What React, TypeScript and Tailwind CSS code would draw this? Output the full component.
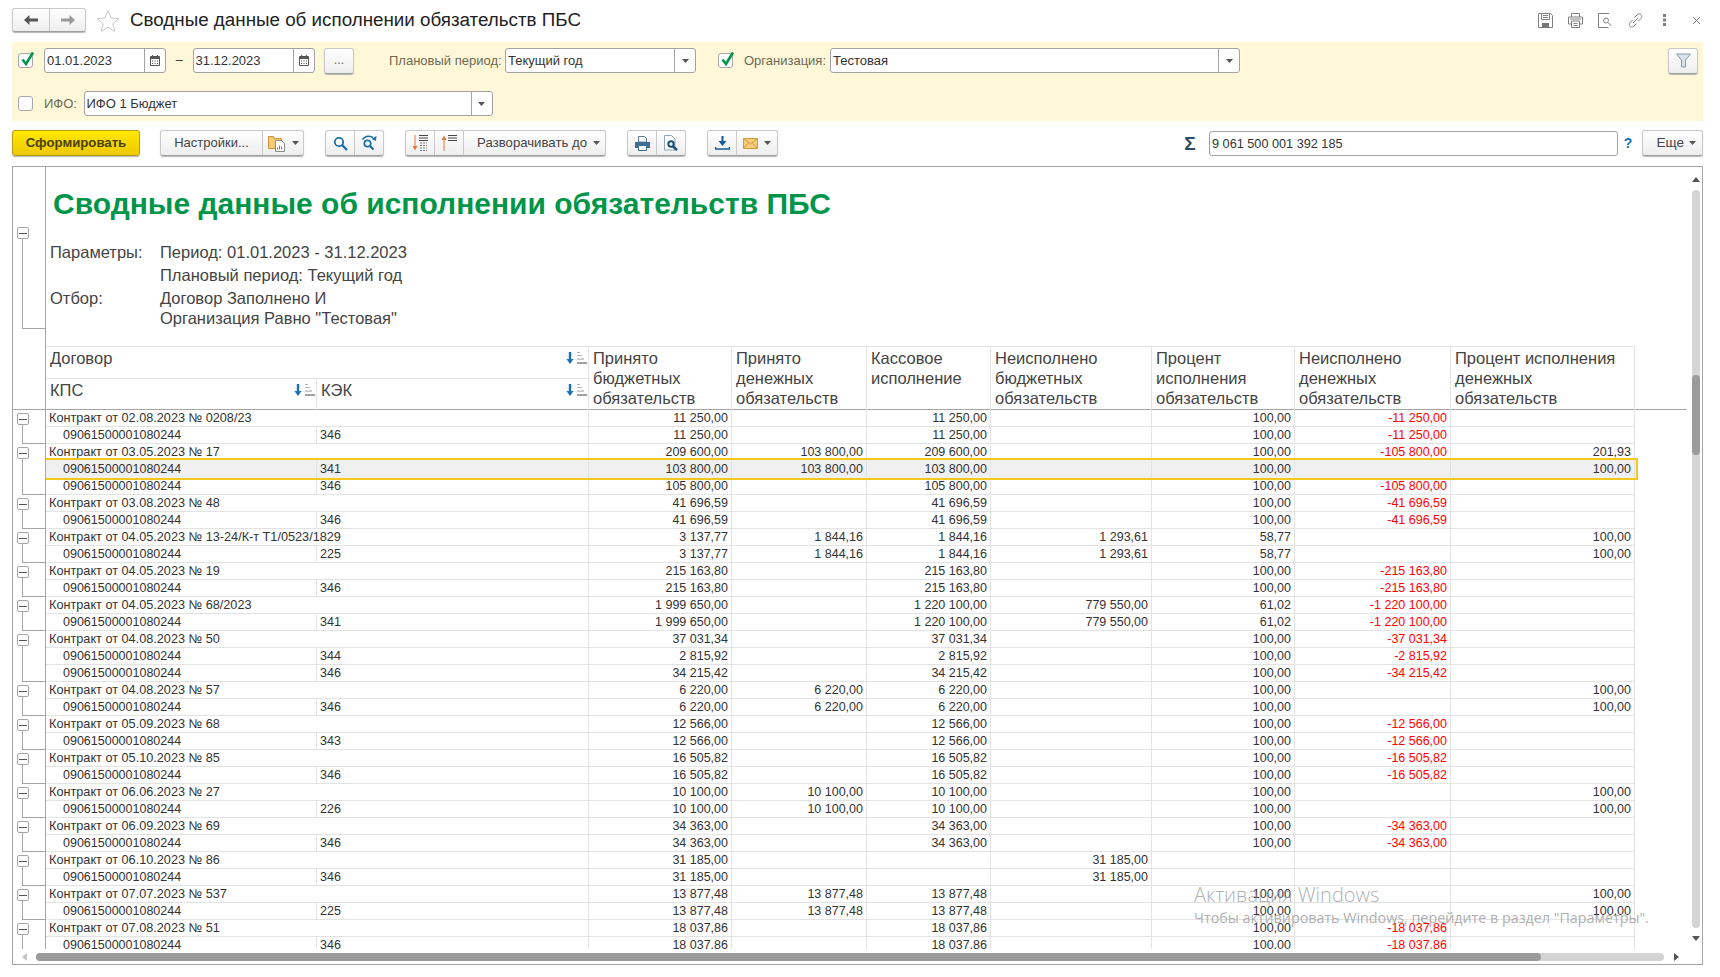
import type { ReactNode } from 'react';

type Row = { name?: string; kek?: string; v: string[]; last?: boolean; sel?: boolean };

const GRID = 'grid grid-cols-[271px_272px_143px_135px_124px_161px_143px_156px_184px] w-[1589px]';

function group(name: string, v: string[], kids: { kek: string; v?: string[]; sel?: boolean }[]): Row[] {
  const rows: Row[] = [{ name, v }];
  kids.forEach((k, i) => {
    rows.push({ kek: k.kek, v: k.v ?? v, last: i === kids.length - 1, sel: k.sel });
  });
  return rows;
}

const rows: Row[] = [
  ...group('Контракт от 02.08.2023 № 0208/23', ['11 250,00', '', '11 250,00', '', '100,00', '-11 250,00', ''], [{ kek: '346' }]),
  ...group('Контракт от 03.05.2023 № 17', ['209 600,00', '103 800,00', '209 600,00', '', '100,00', '-105 800,00', '201,93'], [
    { kek: '341', v: ['103 800,00', '103 800,00', '103 800,00', '', '100,00', '', '100,00'], sel: true },
    { kek: '346', v: ['105 800,00', '', '105 800,00', '', '100,00', '-105 800,00', ''] },
  ]),
  ...group('Контракт от 03.08.2023 № 48', ['41 696,59', '', '41 696,59', '', '100,00', '-41 696,59', ''], [{ kek: '346' }]),
  ...group('Контракт от 04.05.2023 № 13-24/К-т Т1/0523/1829', ['3 137,77', '1 844,16', '1 844,16', '1 293,61', '58,77', '', '100,00'], [{ kek: '225' }]),
  ...group('Контракт от 04.05.2023 № 19', ['215 163,80', '', '215 163,80', '', '100,00', '-215 163,80', ''], [{ kek: '346' }]),
  ...group('Контракт от 04.05.2023 № 68/2023', ['1 999 650,00', '', '1 220 100,00', '779 550,00', '61,02', '-1 220 100,00', ''], [{ kek: '341' }]),
  ...group('Контракт от 04.08.2023 № 50', ['37 031,34', '', '37 031,34', '', '100,00', '-37 031,34', ''], [
    { kek: '344', v: ['2 815,92', '', '2 815,92', '', '100,00', '-2 815,92', ''] },
    { kek: '346', v: ['34 215,42', '', '34 215,42', '', '100,00', '-34 215,42', ''] },
  ]),
  ...group('Контракт от 04.08.2023 № 57', ['6 220,00', '6 220,00', '6 220,00', '', '100,00', '', '100,00'], [{ kek: '346' }]),
  ...group('Контракт от 05.09.2023 № 68', ['12 566,00', '', '12 566,00', '', '100,00', '-12 566,00', ''], [{ kek: '343' }]),
  ...group('Контракт от 05.10.2023 № 85', ['16 505,82', '', '16 505,82', '', '100,00', '-16 505,82', ''], [{ kek: '346' }]),
  ...group('Контракт от 06.06.2023 № 27', ['10 100,00', '10 100,00', '10 100,00', '', '100,00', '', '100,00'], [{ kek: '226' }]),
  ...group('Контракт от 06.09.2023 № 69', ['34 363,00', '', '34 363,00', '', '100,00', '-34 363,00', ''], [{ kek: '346' }]),
  ...group('Контракт от 06.10.2023 № 86', ['31 185,00', '', '', '31 185,00', '', '', ''], [{ kek: '346' }]),
  ...group('Контракт от 07.07.2023 № 537', ['13 877,48', '13 877,48', '13 877,48', '', '100,00', '', '100,00'], [{ kek: '225' }]),
  ...group('Контракт от 07.08.2023 № 51', ['18 037,86', '', '18 037,86', '', '100,00', '-18 037,86', ''], [{ kek: '346' }]),
];

const headers = [
  ['Принято', 'бюджетных', 'обязательств'],
  ['Принято', 'денежных', 'обязательств'],
  ['Кассовое', 'исполнение'],
  ['Неисполнено', 'бюджетных', 'обязательств'],
  ['Процент', 'исполнения', 'обязательств'],
  ['Неисполнено', 'денежных', 'обязательств'],
  ['Процент исполнения', 'денежных', 'обязательств'],
];

function Caret() {
  return (
    <svg width="7" height="4" viewBox="0 0 7 4" className="shrink-0">
      <path d="M0 0h7L3.500 4z" fill="#555" />
    </svg>
  );
}

function CalendarIcon() {
  return (
    <svg width="10" height="11" viewBox="0 0 10 11">
      <path d="M.5 1.500h9v9h-9z" fill="#fff" stroke="#555" />
      <path d="M.5 1.500h9v2.500h-9z" fill="#555" />
      <path d="M2 5.500h1v1H2zM4.500 5.500h1v1h-1zM7 5.500h1v1H7zM2 8h1v1H2zM4.500 8h1v1h-1zM7 8h1v1H7z" fill="#555" />
      <path d="M2.500 0v2M7.500 0v2" stroke="#555" />
    </svg>
  );
}

function Check() {
  return (
    <svg width="15" height="15" viewBox="0 0 15 15" className="absolute left-[1px] -top-[3px]">
      <path d="M2.500 8.500 6 13 13 1.500" fill="none" stroke="#00964a" strokeWidth="2.600" />
    </svg>
  );
}

function Checkbox({ on, className }: { on?: boolean; className?: string }) {
  return (
    <div className={`relative w-[15px] h-[15px] shrink-0 bg-white border border-[#a8a8a8] rounded-[3px] ${className ?? ''}`}>
      {on && <Check />}
    </div>
  );
}

function Field({ w, value, icon, className }: { w: string; value: string; icon: ReactNode; className?: string }) {
  return (
    <div className={`${w} h-[25px] shrink-0 flex bg-white border border-[#a3a3a3] rounded-[3px] ${className ?? ''}`}>
      <div className="flex-1 pl-[2px] leading-[24px] text-[13px] text-[#333] truncate">{value}</div>
      <div className="w-[21px] border-l border-[#a3a3a3] flex items-center justify-center">{icon}</div>
    </div>
  );
}

const BTN = 'h-[26px] shrink-0 flex bg-gradient-to-b from-white to-[#eeeeee] border border-[#c9c9c9] border-b-[#9f9f9f] rounded-[3px] shadow-[0_1px_1px_#b5b5b5]';

function Seg({ w, children, first }: { w: string; children: ReactNode; first?: boolean }) {
  return (
    <div className={`${w} flex items-center justify-center gap-[6px] ${first ? '' : 'border-l border-[#c9c9c9]'}`}>{children}</div>
  );
}

function SortMark() {
  return (
    <svg width="21" height="14" viewBox="0 0 21 14" className="shrink-0">
      <path d="M4 1v8" stroke="#1671bd" strokeWidth="2.400" />
      <path d="M.5 8h7L4 13z" fill="#1671bd" />
      <path d="M11 1.500h3M11 4.500h5" stroke="#b5b5b5" />
      <path d="M11 8h7" stroke="#9a9a9a" />
      <path d="M11 12h10" stroke="#666" strokeWidth="1.200" />
    </svg>
  );
}

function FolderDoc() {
  return (
    <svg width="18" height="18" viewBox="0 0 18 18">
      <path d="M.5 2.500h5l1 2h7v10h-13z" fill="#f3cb74" stroke="#c8923a" />
      <path d="M7.500 6.500h6l3 3v8h-9z" fill="#fff" stroke="#8a8a8a" />
      <path d="M9.500 15.500v-2" stroke="#4aa050" />
      <path d="M11.500 15.500v-4" stroke="#d9534f" />
      <path d="M13.500 15.500v-3" stroke="#3f8fd0" />
    </svg>
  );
}

function SearchIcon() {
  return (
    <svg width="15" height="15" viewBox="0 0 15 15">
      <circle cx="6" cy="6" r="4.200" fill="#fff" stroke="#1d6fa8" strokeWidth="1.800" />
      <path d="m9.200 9.200 4.800 4.800" stroke="#1d6fa8" strokeWidth="2.400" />
    </svg>
  );
}

function RefreshSearchIcon() {
  return (
    <svg width="17" height="16" viewBox="0 0 17 16">
      <path d="M1.500 4.500C4 1 8 .5 12 2.500" fill="none" stroke="#1d6fa8" strokeWidth="1.500" />
      <path d="m15.500 1-.5 5-4.500-2z" fill="#1d6fa8" />
      <circle cx="6.500" cy="8.500" r="3.200" fill="#fff" stroke="#1d6fa8" strokeWidth="1.700" />
      <path d="m9 11 3.500 3.500" stroke="#1d6fa8" strokeWidth="2.200" />
    </svg>
  );
}

function ExpandIcon() {
  return (
    <svg width="16" height="16" viewBox="0 0 16 16">
      <path d="M3 0v12" stroke="#e8743b" />
      <path d="M.5 11h5L3 15.500z" fill="#e8743b" />
      <path d="M7 .5h9M7 3h9M7 5.500h9" stroke="#444" />
      <path d="M8 8h7M8 10.500h7M8 13h7M8 15.500h7" stroke="#777" strokeDasharray="2 1" />
    </svg>
  );
}

function CollapseIcon() {
  return (
    <svg width="16" height="16" viewBox="0 0 16 16">
      <path d="M3 3.500V16" stroke="#e8743b" />
      <path d="M.5 5h5L3 .5z" fill="#e8743b" />
      <path d="M7 .5h9M7 3h9M7 5.500h9" stroke="#444" />
    </svg>
  );
}

function PrintIcon() {
  return (
    <svg width="15" height="15" viewBox="0 0 15 15">
      <path d="M3.500.5h6l2 2V6h-8z" fill="#fff" stroke="#5e7e96" />
      <path d="M0 6h15v6H0z" fill="#3f6f93" />
      <path d="M3.500 9.500h8v5h-8z" fill="#fff" stroke="#3f6f93" />
    </svg>
  );
}

function PreviewIcon() {
  return (
    <svg width="15" height="16" viewBox="0 0 15 16">
      <path d="M.5.5h7l3.500 3.500v11H.5z" fill="#fff" stroke="#8fa6b8" />
      <circle cx="7" cy="9" r="2.700" fill="#fff" stroke="#174f78" strokeWidth="2" />
      <path d="m9 11.500 4 3.500" stroke="#174f78" strokeWidth="2.400" />
    </svg>
  );
}

function DownloadIcon() {
  return (
    <svg width="15" height="14" viewBox="0 0 15 14">
      <path d="M7.500 0v6" stroke="#0f5f96" strokeWidth="2" />
      <path d="M3.500 5h8l-4 5z" fill="#0f5f96" />
      <path d="M.5 11v2h14v-2" fill="none" stroke="#0f5f96" strokeWidth="1.500" />
    </svg>
  );
}

function MailIcon() {
  return (
    <svg width="15" height="11" viewBox="0 0 15 11">
      <path d="M.5.5h14v10H.5z" fill="#f4cc7c" stroke="#d29a3a" />
      <path d="m.5.5 7 5.500 7-5.500M.5 10.500l5-5.500M14.500 10.500l-5-5.500" fill="none" stroke="#d29a3a" />
    </svg>
  );
}

function FilterIcon() {
  return (
    <svg width="15" height="15" viewBox="0 0 15 15">
      <path d="M.5 1h14L9.500 7v7h-4V7z" fill="#d7e2ea" stroke="#8d9aa5" />
    </svg>
  );
}

function TitleIcons() {
  return (
    <div className="ml-auto flex items-center">
      <svg width="15" height="15" viewBox="0 0 15 15" className="mr-[15px]">
        <path d="M.5.5h12l2 2v12H.5z" fill="none" stroke="#808080" />
        <path d="M3.500.5v6h8v-6M5 2.500h5M5 4.500h5" fill="none" stroke="#808080" />
        <path d="M4 10h7v5H4z" fill="#777" />
      </svg>
      <svg width="15" height="15" viewBox="0 0 15 15" className="mr-[15px]">
        <path d="M3.500 4V.5h8V4M3.500 11H.5V4h14v7h-3" fill="none" stroke="#808080" />
        <path d="M3.500 8h8v6.500h-8zM5.500 10.500h4M5.500 12.500h4M2 6h11" fill="none" stroke="#808080" />
      </svg>
      <svg width="15" height="15" viewBox="0 0 15 15" className="mr-[15px]">
        <path d="M11 .5H.5v14h10" fill="none" stroke="#808080" />
        <circle cx="8" cy="7.500" r="2.500" fill="none" stroke="#808080" />
        <path d="m10 9.500 3.500 3.500" stroke="#808080" />
      </svg>
      <svg width="15" height="15" viewBox="0 0 15 15" className="mr-[20px]">
        <path d="M6.500 4.500 9 2c1.500-1.500 3-1.300 4-.3s1.200 2.500-.3 4L10.200 8.200M8.500 10.500 6 13c-1.500 1.500-3 1.300-4 .3s-1.200-2.500.3-4L4.800 6.800M5 10l5-5" fill="none" stroke="#808080" />
      </svg>
      <svg width="4" height="12" viewBox="0 0 4 12" className="mr-[25px]">
        <path d="M0 0h3v3H0zM0 4.500h3v3H0zM0 9h3v3H0z" fill="#808080" />
      </svg>
      <svg width="9" height="9" viewBox="0 0 9 9">
        <path d="m1 1 7 7M8 1 1 8" stroke="#808080" />
      </svg>
    </div>
  );
}

function TreeBox() {
  return (
    <>
      <div className="absolute left-[4px] top-[3px] w-[12px] h-[12px] bg-white border border-[#a5a5a5] rounded-[2px] flex items-center justify-center">
        <div className="w-[8px] h-[1px] bg-[#555]" />
      </div>
      <div className="absolute left-[9px] top-[15px] bottom-0 w-[1px] bg-[#a5a5a5]" />
    </>
  );
}

function GutterCell({ row }: { row: Row }) {
  return (
    <div className="relative w-[33px] shrink-0 border-r border-[#a5a5a5]">
      {row.name ? (
        <TreeBox />
      ) : (
        <>
          <div className="absolute left-[9px] top-0 bottom-0 w-[1px] bg-[#a5a5a5]" />
          {row.last && <div className="absolute left-[9px] right-0 bottom-0 h-[1px] bg-[#a5a5a5]" />}
        </>
      )}
    </div>
  );
}

function Amounts({ v, sel }: { v: string[]; sel?: boolean }) {
  return (
    <>
      {v.map((x, i) => (
        <div
          key={i}
          className={`border-r border-[#e3e3e3] pr-[3px] text-right whitespace-nowrap ${sel ? 'relative z-20' : ''} ${x.startsWith('-') ? 'text-[#ff0000]' : ''}`}
        >
          {x}
        </div>
      ))}
    </>
  );
}

function DataRow({ row }: { row: Row }) {
  return (
    <div className="flex h-[17px] leading-[17px]">
      <GutterCell row={row} />
      <div className={`${GRID} relative border-b border-[#e3e3e3]`}>
        {row.sel && (
          <div className="absolute left-0 -right-[3px] -top-[3px] -bottom-[3px] z-10 bg-[#f0f0f0] border-y-2 border-r-2 border-[#f5c71a]" />
        )}
        {row.name ? (
          <div className="col-span-2 border-r border-[#e3e3e3] pl-[3px] text-[12.7px] whitespace-nowrap">{row.name}</div>
        ) : (
          <>
            <div className={`border-r border-[#e3e3e3] pl-[17px] ${row.sel ? 'relative z-20' : ''}`}>09061500001080244</div>
            <div className={`border-r border-[#e3e3e3] pl-[3px] ${row.sel ? 'relative z-20' : ''}`}>{row.kek}</div>
          </>
        )}
        <Amounts v={row.v} sel={row.sel} />
      </div>
    </div>
  );
}

function TableHeader() {
  return (
    <div className="flex w-[1674px] h-[64px] border-b border-[#a5a5a5]">
      <div className="w-[33px] shrink-0 border-r border-[#a5a5a5]" />
      <div className={`${GRID} grid-rows-[32px_31px] border-t border-[#e3e3e3] text-[16.5px] leading-[20px] text-[#444]`}>
        <div className="col-span-2 border-r border-b border-[#e3e3e3] pl-[4px] pr-[1px] flex justify-between">
          <span className="pt-[1px]">Договор</span>
          <span className="pt-[4px]"><SortMark /></span>
        </div>
        {headers.map((h, i) => (
          <div key={i} className="row-span-2 border-r border-[#e3e3e3] pl-[4px] pt-[1px]">
            {h.map((t) => (
              <div key={t} className="whitespace-nowrap">{t}</div>
            ))}
          </div>
        ))}
        <div className="border-r border-[#e3e3e3] pl-[4px] pr-[1px] flex justify-between col-start-1 row-start-2">
          <span className="pt-[1px]">КПС</span>
          <span className="pt-[4px]"><SortMark /></span>
        </div>
        <div className="border-r border-[#e3e3e3] pl-[4px] pr-[1px] flex justify-between col-start-2 row-start-2">
          <span className="pt-[1px]">КЭК</span>
          <span className="pt-[4px]"><SortMark /></span>
        </div>
      </div>
    </div>
  );
}

function ReportTop() {
  return (
    <div className="flex h-[179px]">
      <div className="relative w-[33px] shrink-0 border-r border-[#a5a5a5]">
        <div className="absolute left-[4px] top-[60px] w-[12px] h-[12px] bg-white border border-[#a5a5a5] rounded-[2px] flex items-center justify-center">
          <div className="w-[8px] h-[1px] bg-[#555]" />
        </div>
        <div className="absolute left-[9px] right-0 top-[72px] h-[90px] border-l border-b border-[#a5a5a5]" />
      </div>
      <div className="flex-1 text-[#444]">
        <h1 className="pl-[7px] pt-[19px] text-[30px] leading-[36px] font-bold text-[#00964a] whitespace-nowrap">
          Сводные данные об исполнении обязательств ПБС
        </h1>
        <div className="mt-[19px] pl-[4px] grid grid-cols-[110px_1fr] text-[16.5px] grid-rows-[23px_23px_22px_19px] leading-[23px]">
          <div>Параметры:</div>
          <div>Период: 01.01.2023 - 31.12.2023</div>
          <div />
          <div>Плановый период: Текущий год</div>
          <div>Отбор:</div>
          <div>Договор Заполнено И</div>
          <div />
          <div className="leading-[19px]">Организация Равно "Тестовая"</div>
        </div>
      </div>
    </div>
  );
}

function Scrollbars() {
  return (
    <>
      <svg width="8" height="5" viewBox="0 0 8 5" className="absolute left-[1679px] top-[10px]"><path d="M0 5h8L4 0z" fill="#555" /></svg>
      <div className="absolute left-[1679px] top-[23px] w-[8px] h-[738px] rounded-[4px] bg-[#d4d4d4]">
        <div className="absolute left-0 top-[185px] w-[8px] h-[80px] rounded-[4px] bg-[#9b9b9b]" />
      </div>
      <svg width="8" height="5" viewBox="0 0 8 5" className="absolute left-[1679px] top-[769px]"><path d="M0 0h8L4 5z" fill="#555" /></svg>
      <svg width="5" height="8" viewBox="0 0 5 8" className="absolute left-[9px] top-[786px]"><path d="M5 0v8L0 4z" fill="#c4c4c4" /></svg>
      <div className="absolute left-[23px] top-[786px] w-[1628px] h-[8px] rounded-[4px] bg-[#d4d4d4]">
        <div className="absolute left-0 top-0 w-[1505px] h-[8px] rounded-[4px] bg-[#9b9b9b]" />
      </div>
      <svg width="5" height="8" viewBox="0 0 5 8" className="absolute left-[1661px] top-[786px]"><path d="M0 0v8l5-4z" fill="#555" /></svg>
    </>
  );
}

export default function App() {
  return (
    <div className="relative w-[1720px] h-[977px] overflow-hidden bg-white font-['Liberation_Sans',Arial,sans-serif] text-[12.5px] text-[#333]">
      {/* window title */}
      <div className="flex items-center h-[24px] mt-[8px] pl-3 pr-[19px]">
        <div className={`w-[74px] !h-[24px] ${BTN}`}>
          <Seg w="w-[36px]" first>
            <svg width="14" height="10" viewBox="0 0 14 10"><path d="M5.500 0v3.500H14v3H5.500V10L0 5z" fill="#555" /></svg>
          </Seg>
          <Seg w="w-[36px]">
            <svg width="14" height="10" viewBox="0 0 14 10"><path d="M8.500 0v3.500H0v3h8.500V10L14 5z" fill="#9a9a9a" /></svg>
          </Seg>
        </div>
        <svg width="24" height="23" viewBox="0 0 24 23" className="ml-[10px]">
          <path d="m12 1.500 3 7.500 8 .6-6.200 5.100 2 7.800L12 18.200l-6.800 4.300 2-7.800L1 9.600 9 9z" fill="#fff" stroke="#c9c9c9" />
        </svg>
        <div className="ml-[10px] text-[18.8px] text-[#222] whitespace-nowrap">Сводные данные об исполнении обязательств ПБС</div>
        <TitleIcons />
      </div>

      {/* filters */}
      <div className="ml-3 mt-[10px] w-[1691px] h-[79px] bg-[#fff8d8] pt-[6px]">
        <div className="flex items-center h-[25px]">
          <Checkbox on className="ml-[6px]" />
          <Field w="w-[122px] ml-[11px]" value="01.01.2023" icon={<CalendarIcon />} />
          <div className="w-[26.5px] text-center shrink-0">–</div>
          <Field w="w-[122px]" value="31.12.2023" icon={<CalendarIcon />} />
          <div className={`w-[30px] ml-[9.5px] items-center justify-center text-[#666] ${BTN}`}>...</div>
          <div className="ml-[35px] w-[116px] shrink-0 text-[13px] text-[#6b6a52]">Плановый период:</div>
          <Field w="w-[191px]" value="Текущий год" icon={<Caret />} />
          <Checkbox on className="ml-[22px]" />
          <div className="ml-[11px] w-[86px] shrink-0 text-[13px] text-[#6b6a52]">Организация:</div>
          <Field w="w-[410px]" value="Тестовая" icon={<Caret />} />
          <div className={`ml-auto mr-[5px] w-[30px] items-center justify-center ${BTN}`}>
            <FilterIcon />
          </div>
        </div>
        <div className="flex items-center h-[25px] mt-[18px]">
          <Checkbox className="ml-[6px]" />
          <div className="ml-[11px] w-[39.5px] shrink-0 text-[13px] text-[#6b6a52]">ИФО:</div>
          <Field w="w-[409px]" value="ИФО 1 Бюджет" icon={<Caret />} />
        </div>
      </div>

      {/* toolbar */}
      <div className="flex items-center w-[1703px] h-[26px] mt-[9px] pl-3">
        <div className="w-[128px] h-[26px] shrink-0 flex items-center justify-center rounded-[3px] border border-[#b59c10] bg-gradient-to-b from-[#ffe800] to-[#eec800] shadow-[0_1px_1px_#b5b5b5] font-bold text-[13.2px] text-[#4a4000]">
          Сформировать
        </div>
        <div className={`w-[144px] ml-[20px] ${BTN}`}>
          <Seg w="w-[101px]" first><span className="text-[13px] text-[#444]">Настройки...</span></Seg>
          <Seg w="w-[41px]"><FolderDoc /><Caret /></Seg>
        </div>
        <div className={`w-[59px] ml-[21px] ${BTN}`}>
          <Seg w="w-[28px]" first><SearchIcon /></Seg>
          <Seg w="w-[29px]"><RefreshSearchIcon /></Seg>
        </div>
        <div className={`w-[201px] ml-[21px] ${BTN}`}>
          <Seg w="w-[28px]" first><ExpandIcon /></Seg>
          <Seg w="w-[29px]"><CollapseIcon /></Seg>
          <div className="w-[142px] flex items-center justify-end gap-[6px] pr-[5px] border-l border-[#c9c9c9]">
            <span className="text-[13.2px] text-[#444]">Разворачивать до</span>
            <Caret />
          </div>
        </div>
        <div className={`w-[59px] ml-[21px] ${BTN}`}>
          <Seg w="w-[28px]" first><PrintIcon /></Seg>
          <Seg w="w-[29px]"><PreviewIcon /></Seg>
        </div>
        <div className={`w-[71px] ml-[21px] ${BTN}`}>
          <Seg w="w-[28px]" first><DownloadIcon /></Seg>
          <Seg w="w-[41px]"><MailIcon /><Caret /></Seg>
        </div>
        <div className="ml-auto w-[14px] text-center text-[19px] font-bold text-[#2f4a5e] leading-none">Σ</div>
        <div className="ml-[12px] w-[409px] h-[25px] shrink-0 bg-white border border-[#a3a3a3] rounded-[3px] pl-[2px] leading-[24px] text-[12.7px]">9 061 500 001 392 185</div>
        <div className="w-[20px] text-center font-bold text-[#1671bd] text-[14px]">?</div>
        <div className={`ml-[4px] w-[61px] items-center justify-end pr-[6px] gap-[5px] ${BTN}`}>
          <span className="text-[#444] text-[13.5px]">Еще</span>
          <Caret />
        </div>
      </div>

      {/* report */}
      <div className="relative ml-3 mt-[10px] w-[1691px] h-[799px] border border-[#a5a5a5]">
        <ReportTop />
        <TableHeader />
        <div className="h-[539px] overflow-hidden">
          {rows.map((r, i) => (
            <DataRow key={i} row={r} />
          ))}
        </div>
        <Scrollbars />
      </div>

      {/* windows watermark */}
      <div className="absolute left-[1194px] top-[881px] font-['Open_Sans',sans-serif] text-[#9a9a9a]/80 pointer-events-none">
        <div className="text-[20px] leading-[28px] font-light">Активация Windows</div>
        <div className="text-[14.3px] leading-[20px] -mt-[1px] whitespace-nowrap">Чтобы активировать Windows, перейдите в раздел "Параметры".</div>
      </div>
    </div>
  );
}
